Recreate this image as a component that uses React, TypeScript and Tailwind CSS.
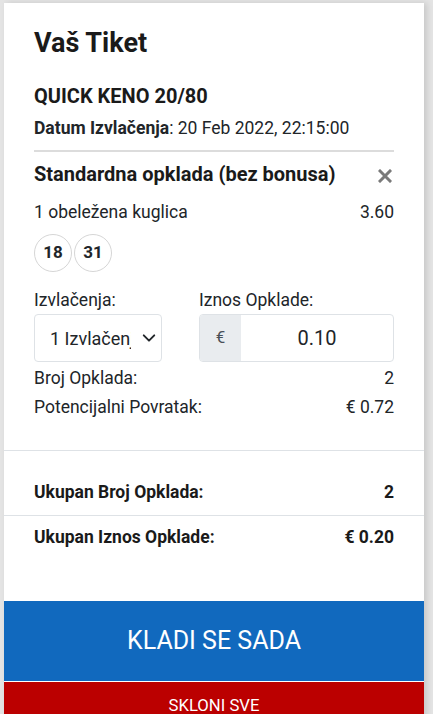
import React from "react";

export default function App() {
  return (
    <div className="min-h-[714px] bg-[#e4e4e4] pt-[3px] pl-[4px] overflow-hidden" style={{ fontFamily: "Roboto, 'Liberation Sans', sans-serif" }}>
      <div className="w-[420px] bg-white shadow-[3px_0_6px_rgba(0,0,0,0.12)] text-[#212529]">
        <div className="px-[30px] pt-[21px]">
          <h1 className="text-[27px] leading-[38px] font-bold text-[#1a1a1a]">Vaš Tiket</h1>
          <div className="mt-[22px] text-[20px] leading-[24px] font-bold text-[#1a1a1a]">QUICK KENO 20/80</div>
          <div className="mt-[8px] text-[17.5px] leading-[24px]">
            <span className="font-bold">Datum Izvlačenja</span>: 20 Feb 2022, 22:15:00
          </div>
          <div className="mt-[10px] h-[2px] bg-[#dcdcdc]" />
          <div className="mt-[10px] flex items-center justify-between">
            <span className="text-[20px] leading-[24px] font-bold text-[#1a1a1a]">Standardna opklada (bez bonusa)</span>
            <svg width="14" height="14" viewBox="0 0 14 14" className="mr-[2px] mt-[4px]">
              <path d="M2 2 L12 12 M12 2 L2 12" stroke="#7a7a7a" strokeWidth="3" strokeLinecap="square" />
            </svg>
          </div>
          <div className="mt-[14px] flex justify-between text-[17.5px] leading-[24px]">
            <span>1 obeležena kuglica</span>
            <span>3.60</span>
          </div>
          <div className="mt-[10px] flex gap-[2px]">
            <div className="w-[38px] h-[38px] rounded-full border border-[#d6d6d6] flex items-center justify-center text-[17px] font-bold">18</div>
            <div className="w-[38px] h-[38px] rounded-full border border-[#d6d6d6] flex items-center justify-center text-[17px] font-bold">31</div>
          </div>
          <div className="mt-[16px] flex">
            <div className="w-[128px]">
              <div className="text-[17.5px] leading-[24px]">Izvlačenja:</div>
              <div className="mt-[2px] h-[48px] rounded-[4px] border border-[#dee2e6] flex items-center pl-[15px] pr-[5px]">
                <span className="w-[81px] overflow-hidden whitespace-nowrap text-[18px]">1 Izvlačenja</span>
                <svg width="14" height="14" viewBox="0 0 16 16" className="ml-auto">
                  <path d="M2 5 L8 11 L14 5" fill="none" stroke="#212529" strokeWidth="2.2" strokeLinecap="round" strokeLinejoin="round" />
                </svg>
              </div>
            </div>
            <div className="ml-[37px] flex-1">
              <div className="text-[17.5px] leading-[24px]">Iznos Opklade:</div>
              <div className="mt-[2px] h-[48px] rounded-[4px] border border-[#dee2e6] flex overflow-hidden">
                <div className="w-[41px] bg-[#e9ecef] flex items-center justify-center text-[17px] text-[#495057]">€</div>
                <div className="flex-1 flex items-center justify-center text-[20px]">0.10</div>
              </div>
            </div>
          </div>
          <div className="mt-[2px] flex justify-between text-[17.5px] leading-[29px]">
            <span>Broj Opklada:</span>
            <span>2</span>
          </div>
          <div className="flex justify-between text-[17.5px] leading-[29px]">
            <span>Potencijalni Povratak:</span>
            <span>€ 0.72</span>
          </div>
        </div>
        <div className="mt-[28px] h-px bg-[#dee2e6]" />
        <div className="px-[30px] pt-[29px] pb-[11px] flex justify-between text-[17.5px] leading-[24px] font-bold text-[#1a1a1a]">
          <span>Ukupan Broj Opklada:</span>
          <span>2</span>
        </div>
        <div className="h-px bg-[#dee2e6]" />
        <div className="px-[30px] pt-[9px] flex justify-between text-[17.5px] leading-[24px] font-bold text-[#1a1a1a]">
          <span>Ukupan Iznos Opklade:</span>
          <span>€ 0.20</span>
        </div>
        <button className="mt-[52px] w-full h-[80px] bg-[#1169be] text-white text-[25px] flex items-center justify-center">KLADI SE SADA</button>
        <button className="mt-px w-full h-[48px] bg-[#bb0000] text-white text-[16.7px] flex items-center justify-center">SKLONI SVE</button>
      </div>
    </div>
  );
}
